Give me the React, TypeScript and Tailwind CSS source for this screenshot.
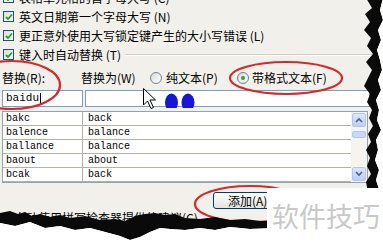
import React from "react";

const cjk = "font-['Noto_Sans_CJK_SC','Noto_Sans',sans-serif]";

const Check = () => (
  <span className="ml-[3px] flex h-[11px] w-[11px] shrink-0 items-center justify-center border border-[#1c5180] bg-gradient-to-br from-[#dcdcd5] to-white">
    <svg width="8" height="8" viewBox="0 0 8 8">
      <path d="M1 4 L3 6 L7 1.5" fill="none" stroke="#21a121" strokeWidth="1.8" />
    </svg>
  </span>
);

const CheckRow = ({ label, hot, line }: { label: string; hot: string; line?: boolean }) => (
  <div className="flex h-[19px] items-center">
    <Check />
    <span className="ml-[5px] whitespace-nowrap">
      {label} ({hot})
    </span>
    {line && <span className="ml-[4px] mr-[8px] h-[2px] flex-1 border-t border-[#cfcdc0] border-b border-b-white" />}
  </div>
);

const Radio = ({ on }: { on?: boolean }) => (
  <span className="flex h-[12px] w-[12px] shrink-0 items-center justify-center rounded-full border border-[#6f7f93] bg-gradient-to-br from-[#dcdcd5] to-white">
    {on && <span className="h-[4px] w-[4px] rounded-full bg-[#2aa82a]" />}
  </span>
);

const rows = [
  ["bakc", "back"],
  ["balence", "balance"],
  ["ballance", "balance"],
  ["baout", "about"],
  ["bcak", "back"],
];

const Arrow = ({ up }: { up?: boolean }) => (
  <span className="flex h-[14px] w-[14px] items-center justify-center rounded-[2px] border border-[#b4c6ee] bg-gradient-to-b from-[#dde6fd] to-[#bccdf7]">
    <svg width="8" height="6" viewBox="0 0 8 6">
      <path d={up ? "M1 5 L4 2 L7 5" : "M1 1 L4 4 L7 1"} fill="none" stroke="#4d6185" strokeWidth="1.6" />
    </svg>
  </span>
);

export default function App() {
  return (
    <div className={`relative h-[246px] w-[383px] overflow-hidden bg-[#f1f0ea] text-[12px] leading-none text-black ${cjk}`}>
      <div className="-mt-[12px]">
        <CheckRow label="表格单元格的首字母大写" hot="C" />
        <CheckRow label="英文日期第一个字母大写" hot="N" />
        <CheckRow label="更正意外使用大写锁定键产生的大小写错误" hot="L" />
        <CheckRow label="键入时自动替换" hot="T" line />
      </div>

      <div className="mt-[5px] flex h-[18px] items-center whitespace-nowrap">
        <span className="w-[81px] pl-[2px]">替换(R):</span>
        <span className="w-[69px]">替换为(W)</span>
        <Radio />
        <span className="ml-[4px] w-[71px]">纯文本(P)</span>
        <Radio on />
        <span className="ml-[3px]">带格式文本(F)</span>
      </div>

      <div className="mt-[3px] flex h-[17px] gap-[2px]">
        <div className="ml-[2px] flex w-[81px] items-center border border-[#7f9db9] bg-white pl-[3px] font-['Liberation_Mono',monospace] text-[11px]">
          baidu
          <span className="ml-[1px] h-[12px] w-[1px] bg-black" />
        </div>
        <div className="mr-[13px] flex-1 border border-[#7f9db9] bg-white" />
      </div>

      <div className="ml-[2px] mt-[4px] flex w-[366px] border border-[#8fa3b8] bg-white font-['Liberation_Mono',monospace] text-[10px]">
        <div className="flex-1">
          {rows.map(([a, b]) => (
            <div key={a} className="flex h-[14px] border-b border-[#b5b2a5]">
              <span className="flex w-[80px] items-center border-r border-[#b5b2a5] pl-[3px]">{a}</span>
              <span className="flex items-center pl-[5px]">{b}</span>
            </div>
          ))}
        </div>
        <div className="flex h-[70px] w-[16px] flex-col bg-[#f5f4ef] p-[1px]">
          <Arrow up />
          <span className="mt-[4px] h-[7px] w-[14px] rounded-[2px] border border-[#b4c6ee] bg-[#c9d7fb]" />
          <span className="flex-1" />
          <Arrow />
        </div>
      </div>

      <div className="ml-[213px] mt-[9px] flex h-[17px] w-[80px] items-center rounded-[3px] border border-[#003c74] bg-gradient-to-b from-white to-[#e6e4d8] pl-[14px]">
        添加(A)
      </div>

      <div className="mt-[3px] whitespace-nowrap pl-[14px]">自动使用拼写检查器提供的建议(C)</div>

      <svg className="pointer-events-none absolute inset-0" width="383" height="246" viewBox="0 0 383 246">
        <defs>
          <clipPath id="inp">
            <rect x="0" y="0" width="383" height="108" />
          </clipPath>
        </defs>
        <g clipPath="url(#inp)" fill="#1616d4">
          <ellipse cx="171.5" cy="102.5" rx="6.5" ry="9" />
          <ellipse cx="188" cy="102.5" rx="6.5" ry="9" />
        </g>
        <path
          d="M143.5 88.5 L143.5 105 L147.5 101 L151 108.5 L153.5 107.5 L150 100 L155.5 100 Z"
          fill="white"
          stroke="black"
          strokeWidth="1"
        />
        <g fill="none" stroke="#d3292b" strokeWidth="2.2">
          <ellipse cx="12" cy="85" rx="48" ry="24" />
          <ellipse cx="286" cy="78" rx="56" ry="16" />
          <ellipse cx="250" cy="204" rx="55" ry="18" />
        </g>
        <path
          d="M366 -2 L372 8 L365 14 L370 22 L364 30 L371 38 L367 46 L373 54 L366 62 L372 70 L368 78 L364 86 L370 94 L367 102 L372 110 L369 118 L373 126 L368 134 L371 142 L366 150 L370 158 L367 166 L371 174 L366 182 L368 192
             L380 192 L376 180 L379 170 L375 160 L378 150 L376 140 L381 130 L377 120 L379 110 L376 100 L381 90 L378 80 L382 70 L380 60 L377 50 L381 40 L378 30 L383 20 L380 10 L383 -2 Z"
          fill="#0a0a0a"
        />
        <path
          d="M383 -2 L380 10 L383 20 L378 30 L381 40 L377 50 L380 60 L382 70 L378 80 L381 90 L376 100 L379 110 L377 120 L381 130 L376 140 L378 150 L375 160 L379 170 L376 180 L380 192 L383 192 Z"
          fill="white"
        />
        <path
          d="M0 213 L10 211 L18 214 L25 212 L32 216 L40 214 L50 217 L60 215 L70 218 L85 216 L100 220 L115 219 L125 221 L135 216 L145 214 L155 213 L165 215 L175 214 L185 218 L200 219 L215 217 L230 220 L245 219 L260 221 L275 221
             L275 228 L250 229 L230 227 L215 230 L200 228 L185 230 L170 229 L160 228 L150 232 L140 237 L130 240 L120 236 L105 232 L90 228 L75 230 L60 226 L45 228 L30 222 L15 226 L0 223 Z"
          fill="#0a0a0a"
        />
        <path
          d="M0 223 L15 226 L30 222 L45 228 L60 226 L75 230 L90 228 L105 232 L120 236 L130 240 L140 237 L150 232 L160 228 L170 229 L185 230 L200 228 L215 230 L230 227 L250 229 L275 228 L275 246 L0 246 Z"
          fill="white"
        />
      </svg>

      <div className="absolute bottom-0 left-[267px] right-0 top-[188px] bg-white pl-[5px] pt-[14px] text-[27px] leading-none text-[#c9c9c9]">
        软件技巧
      </div>
    </div>
  );
}
